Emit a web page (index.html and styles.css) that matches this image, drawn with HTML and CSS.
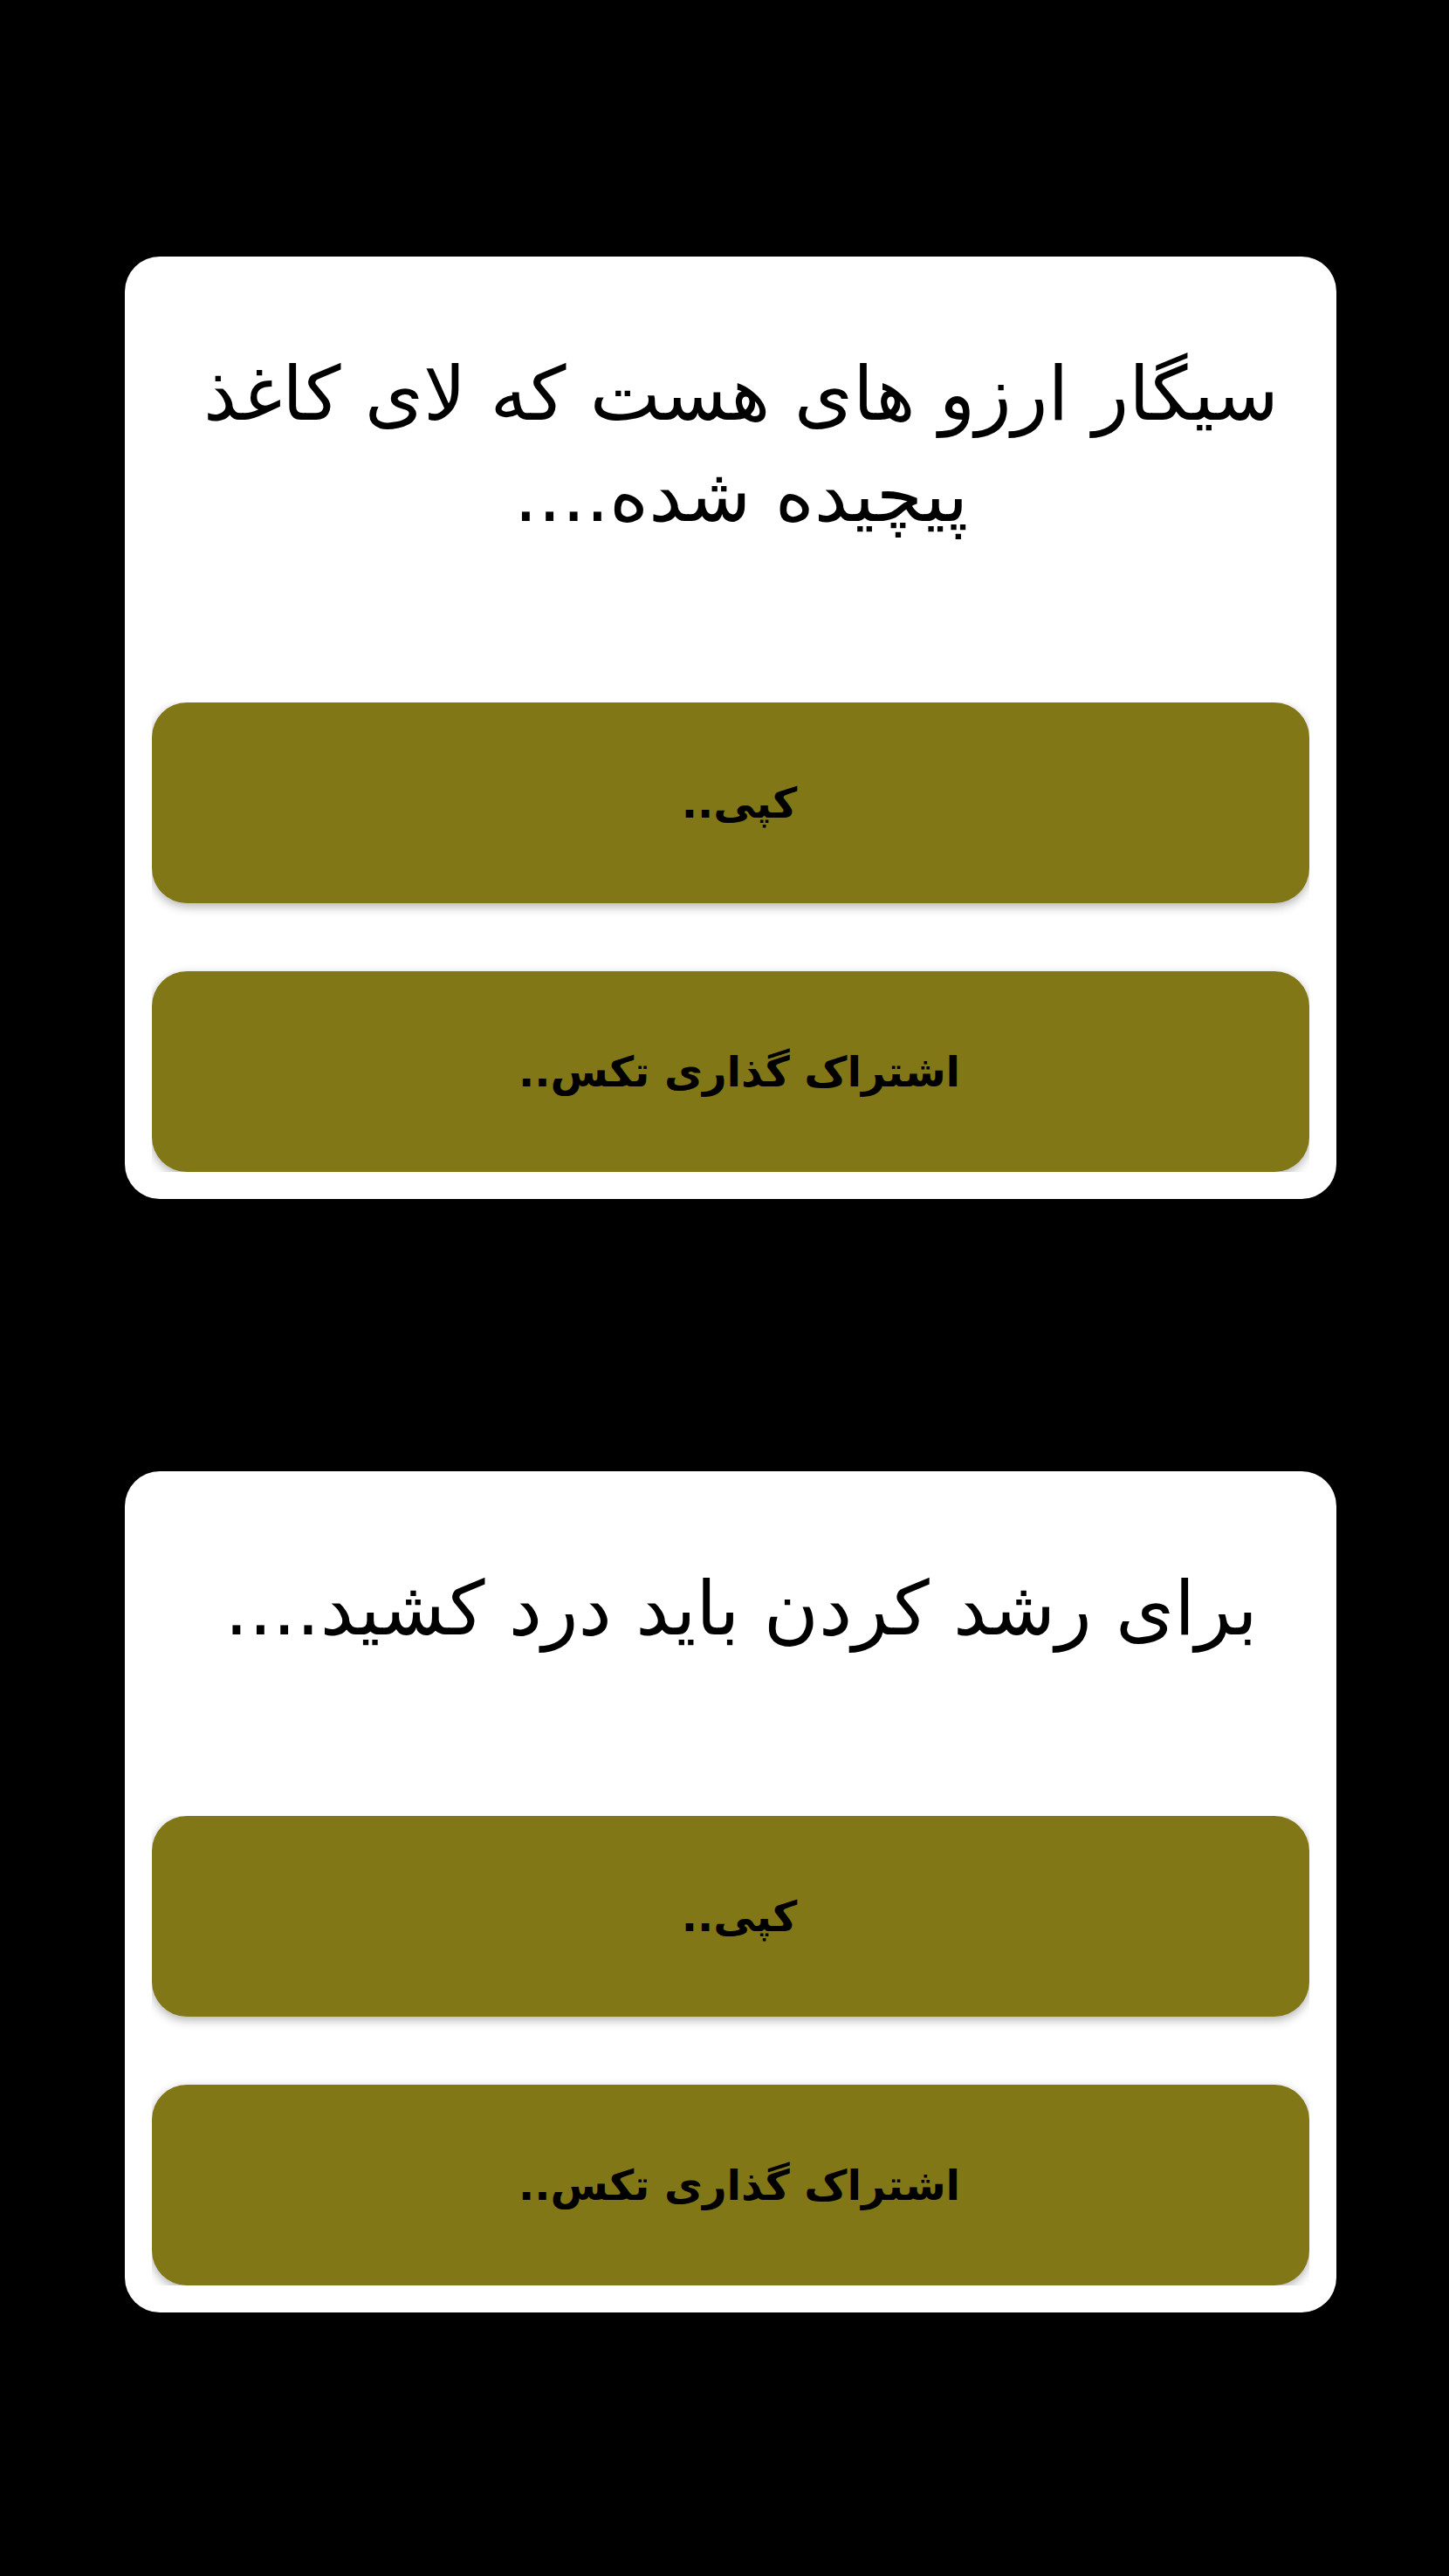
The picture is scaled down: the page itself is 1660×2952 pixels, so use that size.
FILE: index.html
```html
<!DOCTYPE html>
<html lang="fa" dir="rtl">
<head>
<meta charset="utf-8">
<meta name="viewport" content="width=device-width, initial-scale=1">
<title>متن‌ها</title>
<link rel="stylesheet" href="styles.css">
</head>
<body>
<main class="feed">
  <article class="card">
    <p class="quote">سیگار ارزو های هست که لای کاغذ پیچیده شده....</p>
    <div class="actions">
      <button class="action" type="button">کپی..</button>
      <button class="action" type="button">اشتراک گذاری تکس..</button>
    </div>
  </article>
  <article class="card">
    <p class="quote">برای رشد کردن باید درد کشید....</p>
    <div class="actions">
      <button class="action" type="button">کپی..</button>
      <button class="action" type="button">اشتراک گذاری تکس..</button>
    </div>
  </article>
</main>
</body>
</html>
```

FILE: styles.css
```css
* {
  box-sizing: border-box;
}

body {
  margin: 0;
  min-height: 100vh;
  background: #000;
  color: #000;
  font-family: "DejaVu Sans", sans-serif;
}

.feed {
  display: flex;
  flex-direction: column;
  gap: 312px;
  padding: 294px 129px 294px 143px;
}

.card {
  padding: 99px 31px 31px;
  border-radius: 40px;
  background: #fff;
}

.quote {
  margin: 0 0 180px;
  padding: 0 24px 0 48px;
  font-size: 86px;
  line-height: 116px;
  text-align: center;
}

/* Clips the button shadows to the edges of the column */
.actions {
  display: flex;
  flex-direction: column;
  gap: 78px;
  overflow: hidden;
}

.action {
  height: 230px;
  padding: 0 0 0 20px;
  border: 0;
  border-radius: 40px;
  background: #827717;
  box-shadow: 0 4px 12px rgba(0, 0, 0, 0.3);
  color: #000;
  font: bold 48px/60px "DejaVu Sans", sans-serif;
}
```
